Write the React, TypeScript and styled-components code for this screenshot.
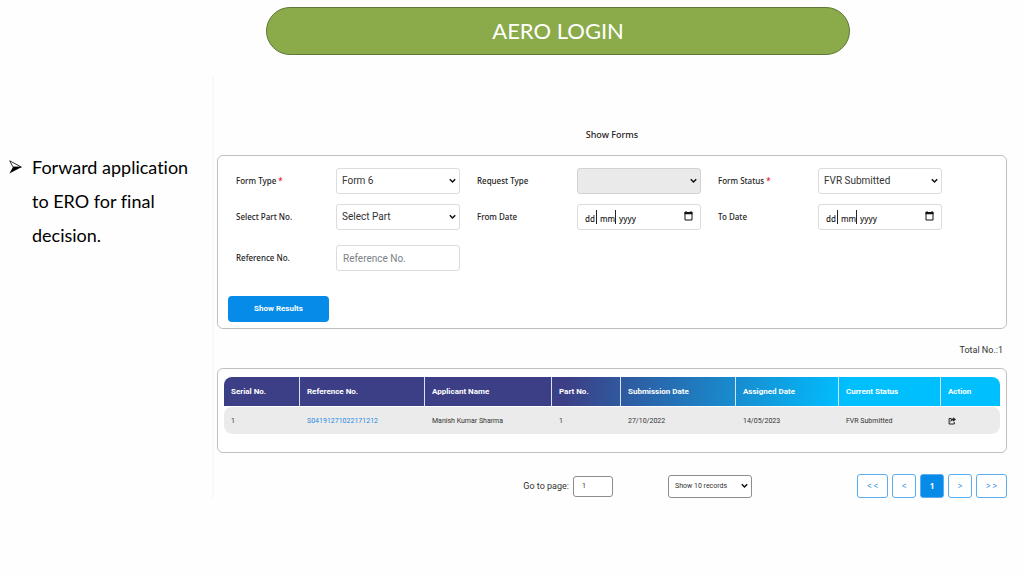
import React from "react";
import styled, { createGlobalStyle, css } from "styled-components";

const ui = '"Noto Sans", "Open Sans", sans-serif';
const alt = 'Roboto, "Liberation Sans", sans-serif';
const slide = 'Lato, "Liberation Sans", sans-serif';

const GlobalStyle = createGlobalStyle`
  *, *::before, *::after { box-sizing: border-box; }
  body { margin: 0; background: #fefefe; font-family: ${alt}; color: #333; }
  button, input, select { font: inherit; color: inherit; margin: 0; }
`;

const Slide = styled.div`
  display: flex;
  flex-direction: column;
  gap: 22px;
  padding-bottom: 16px;
`;

const Banner = styled.header`
  padding: 7px 17% 0 26%;
`;

const BannerTitle = styled.h1`
  margin: 0;
  border: 1px solid #5f7738;
  border-radius: 24px;
  background: #8bab4b;
  color: #fff;
  font: 400 22px/46px ${slide};
  text-align: center;
`;

const Body = styled.div`
  display: flex;
  align-items: flex-start;
`;

const Notes = styled.ul`
  flex: 0 0 212px;
  list-style: none;
  margin: 0;
  padding: 73px 16px 0 9px;
`;

const Note = styled.li`
  display: flex;
  align-items: flex-start;
  gap: 10px;
  color: #000;
  font: 400 18px/34px ${slide};
  font-variant-ligatures: none;
`;

const NoteArrow = styled.svg`
  flex: none;
  margin-top: 10px;
`;

const Screen = styled.main`
  flex: 1;
  min-width: 0;
  padding: 51px 17px 0 3px;
  border-left: 2px solid #f8f8f8;
`;

const Heading = styled.h2`
  margin: 0 0 13px;
  font: 500 9px/14px ${ui};
  color: #222;
  text-align: center;
`;

const card = css`
  background: #fff;
  border: 1px solid #bfbfbf;
  border-radius: 6px;
`;

const FormCard = styled.form`
  ${card}
  padding: 12px 64px 6px 10px;
`;

const Fields = styled.div`
  display: grid;
  grid-template-columns: repeat(3, 1fr);
  gap: 10px 17px;
  padding-left: 8px;
`;

const Field = styled.div<{ $spaced?: boolean }>`
  display: flex;
  align-items: center;
  margin-top: ${(p) => (p.$spaced ? "5px" : "0")};
`;

const Label = styled.label`
  flex: 0 0 100px;
  font: 500 8px/16px ${ui};
  color: #222;
`;
const Required = styled.span`
  color: #e8112d;
  margin-left: 2px;
`;

const control = css`
  width: 100%;
  height: 26px;
  border: 1px solid #d9dde1;
  border-radius: 3px;
  background: #fff;
  font: 400 10px/16px ${alt};
  color: #333;
`;

const TextInput = styled.input`
  ${control}
  padding: 0 6px;
  &::placeholder { color: #7b8288; opacity: 1; }
`;

const SelectWrap = styled.div<{ $small?: boolean }>`
  position: relative;
  flex: ${(p) => (p.$small ? "0 0 84px" : "1")};
  min-width: 0;
  display: flex;
`;

const SelectBox = styled.select<{ $small?: boolean }>`
  ${control}
  appearance: none;
  padding: 0 16px 0 5px;
  &:disabled { background: #eaeaea; border-color: #d2d2d2; opacity: 1; }
  ${(p) =>
    p.$small &&
    css`
      height: 23px;
      border-color: #8d8d8d;
      font: 400 7px/12px ${alt};
      padding-left: 6px;
    `}
`;

const Chevron = styled.svg`
  position: absolute;
  right: 4px;
  top: 50%;
  margin-top: -3px;
  pointer-events: none;
`;

const DateBox = styled.div`
  ${control}
  flex: 1;
  min-width: 0;
  display: flex;
  align-items: center;
  padding: 0 7px;
`;

const DatePart = styled.input<{ $part: "day" | "month" | "year" }>`
  width: ${(p) => ({ day: 11, month: 19, year: 28 })[p.$part]}px;
  height: 14px;
  padding: 2px 0 0 ${(p) => (p.$part === "day" ? 0 : 3)}px;
  border: 0 solid #222;
  border-left-width: ${(p) => (p.$part === "day" ? 0 : 1)}px;
  border-radius: 0;
  background: transparent;
  font: 500 8px/12px ${ui};
  &::placeholder { color: #222; opacity: 1; }
`;

const IconButton = styled.button`
  display: flex;
  padding: 0;
  border: 0;
  background: none;
  cursor: pointer;
`;

const CalendarButton = styled(IconButton)`
  margin: 0 0 2px auto;
`;

const SubmitButton = styled.button`
  display: block;
  width: 101px;
  height: 26px;
  margin-top: 25px;
  border: 0;
  border-radius: 4px;
  background: #068be9;
  color: #fff;
  font: 700 8px/16px ${alt};
  cursor: pointer;
`;

const Total = styled.p`
  margin: 0;
  padding: 14px 4px 11px;
  font: 400 9px/14px ${alt};
  text-align: right;
`;

const TableCard = styled.section`
  ${card}
  padding: 8px 6px 18px;
`;

const Table = styled.table`
  width: 100%;
  table-layout: fixed;
  border-collapse: separate;
  border-spacing: 0;
`;

const Head = styled.thead`
  background: linear-gradient(100deg, #3c3f86 44%, #00bfff 80%);
`;

const TableFrame = styled.div`
  overflow: hidden;
  border-radius: 8px;
`;

const Th = styled.th`
  height: 29px;
  padding: 0 0 0 7px;
  border-right: 1px solid #d5e4f2;
  color: #fff;
  font: 700 8px/14px ${alt};
  text-align: left;
  white-space: nowrap;
  &:last-child { border-right: 0; }
`;

const Td = styled.td`
  height: 28px;
  padding: 0 0 0 7px;
  border-top: 1px solid #fff;
  background: #ebebeb;
  color: #333;
  font: 400 7px/14px ${alt};
  white-space: nowrap;
  &:first-child { border-radius: 8px 0 0 8px; }
  &:last-child { border-radius: 0 8px 8px 0; }
`;

const RefLink = styled.a`
  color: #1f8ae0;
  text-decoration: none;
`;

const Footer = styled.div`
  display: flex;
  align-items: center;
  justify-content: flex-end;
  margin-top: 21px;
`;

const PageLabel = styled.label`
  margin-right: 4px;
  font: 400 9px/14px ${alt};
`;

const PageInput = styled.input`
  width: 40px;
  height: 21px;
  margin-right: 55px;
  padding: 0 8px;
  border: 1px solid #8d8d8d;
  border-radius: 3px;
  background: #fff;
  font: 400 7px/12px ${alt};
`;

const Pager = styled.nav`
  display: flex;
  gap: 4px;
  margin-left: 105px;
`;

const PageButton = styled.button<{ $wide?: boolean; $active?: boolean }>`
  width: ${(p) => (p.$wide ? "31px" : "24px")};
  height: 24px;
  padding: 0;
  border: 1px solid #5aaef0;
  border-radius: 3px;
  background: ${(p) => (p.$active ? "#068be9" : "#fff")};
  color: ${(p) => (p.$active ? "#fff" : "#1f8ae0")};
  font: ${(p) => (p.$active ? 700 : 400)} 8px/16px ${ui};
  cursor: pointer;
`;

const Arrow = () => (
  <Chevron width="7" height="6" viewBox="0 0 7 6" fill="none" stroke="#111" strokeWidth="1.5" aria-hidden="true">
    <path d="M0.8 1.2 3.5 4 6.2 1.2" />
  </Chevron>
);

const CalendarIcon = () => (
  <svg width="9" height="10" viewBox="0 0 9 10" aria-hidden="true">
    <path d="M1 1.5h7v7.5H1z" fill="none" stroke="#111" />
    <path d="M0.5 1h8v2.3h-8zM1.5 0h1v1.5h-1zM6.5 0h1v1.5h-1z" fill="#111" />
  </svg>
);

const ShareIcon = () => (
  <svg width="8" height="8" viewBox="0 0 16 16" aria-hidden="true">
    <path d="M7 3H2.2v11h10.3v-4" fill="none" stroke="#222" strokeWidth="2" />
    <path d="M10.3 0.5 16 5l-5.700 4.500V7C7.500 7 6 8 5 11 4.400 6 6.500 3.200 10.300 3z" fill="#222" />
  </svg>
);

type SelectFieldProps = { id: string; label: string; value: string; required?: boolean; disabled?: boolean };

const SelectField = ({ id, label, value, required, disabled }: SelectFieldProps) => (
  <Field>
    <Label htmlFor={id}>
      {label}
      {required && <Required>*</Required>}
    </Label>
    <SelectWrap>
      <SelectBox id={id} disabled={disabled} defaultValue={value}>
        <option value={value}>{value}</option>
      </SelectBox>
      <Arrow />
    </SelectWrap>
  </Field>
);

const DateField = ({ id, label }: { id: string; label: string }) => (
  <Field role="group" aria-label={label}>
    <Label htmlFor={id}>{label}</Label>
    <DateBox>
      <DatePart id={id} $part="day" placeholder="dd" />
      <DatePart $part="month" placeholder="mm" aria-label={`${label} month`} />
      <DatePart $part="year" placeholder="yyyy" aria-label={`${label} year`} />
      <CalendarButton type="button" aria-label={`Choose ${label}`}>
        <CalendarIcon />
      </CalendarButton>
    </DateBox>
  </Field>
);

const columns: [string, number][] = [
  ["Serial No.", 76],
  ["Reference No.", 125],
  ["Applicant Name", 127],
  ["Part No.", 69],
  ["Submission Date", 115],
  ["Assigned Date", 103],
  ["Current Status", 102],
  ["Action", 59],
];
const tableUnits = columns.reduce((sum, c) => sum + c[1], 0);

export default function App() {
  return (
    <>
      <GlobalStyle />
      <Slide>
        <Banner>
          <BannerTitle>AERO LOGIN</BannerTitle>
        </Banner>
        <Body>
          <Notes>
            <Note>
              <NoteArrow width="13" height="14" viewBox="0 0 13 14" aria-hidden="true">
                <path d="M0.700 0.800 12.300 7H4z" fill="#fff" stroke="#000" strokeWidth="0.800" />
                <path d="M12.700 7 0.400 13.600 4 7z" fill="#000" />
              </NoteArrow>
              <span>Forward application to ERO for final decision.</span>
            </Note>
          </Notes>
          <Screen>
            <Heading>Show Forms</Heading>
            <FormCard onSubmit={(e) => e.preventDefault()}>
              <Fields>
                <SelectField id="form-type" label="Form Type" value="Form 6" required />
                <SelectField id="request-type" label="Request Type" value="" disabled />
                <SelectField id="form-status" label="Form Status" value="FVR Submitted" required />
                <SelectField id="part-no" label="Select Part No." value="Select Part" />
                <DateField id="from-date" label="From Date" />
                <DateField id="to-date" label="To Date" />
                <Field $spaced>
                  <Label htmlFor="reference-no">Reference No.</Label>
                  <TextInput id="reference-no" placeholder="Reference No." />
                </Field>
              </Fields>
              <SubmitButton type="submit">Show Results</SubmitButton>
            </FormCard>
            <Total>Total No.:1</Total>
            <TableCard>
              <TableFrame>
                <Table>
                  <colgroup>
                    {columns.map(([name, units]) => (
                      <col key={name} style={{ width: `${(units / tableUnits) * 100}%` }} />
                    ))}
                  </colgroup>
                  <Head>
                    <tr>
                      {columns.map(([name]) => (
                        <Th key={name} scope="col">{name}</Th>
                      ))}
                    </tr>
                  </Head>
                  <tbody>
                    <tr>
                      <Td>1</Td>
                      <Td><RefLink href="#reference">S04191271022171212</RefLink></Td>
                      <Td>Manish Kumar Sharma</Td>
                      <Td>1</Td>
                      <Td>27/10/2022</Td>
                      <Td>14/05/2023</Td>
                      <Td>FVR Submitted</Td>
                      <Td>
                        <IconButton type="button" aria-label="Forward"><ShareIcon /></IconButton>
                      </Td>
                    </tr>
                  </tbody>
                </Table>
              </TableFrame>
            </TableCard>
            <Footer>
              <PageLabel htmlFor="page">Go to page:</PageLabel>
              <PageInput id="page" defaultValue="1" />
              <SelectWrap $small>
                <SelectBox $small aria-label="Records per page" defaultValue="10">
                  <option value="10">Show 10 records</option>
                </SelectBox>
                <Arrow />
              </SelectWrap>
              <Pager aria-label="Pages">
                <PageButton $wide>&lt; &lt;</PageButton>
                <PageButton>&lt;</PageButton>
                <PageButton $active>1</PageButton>
                <PageButton>&gt;</PageButton>
                <PageButton $wide>&gt; &gt;</PageButton>
              </Pager>
            </Footer>
          </Screen>
        </Body>
      </Slide>
    </>
  );
}
